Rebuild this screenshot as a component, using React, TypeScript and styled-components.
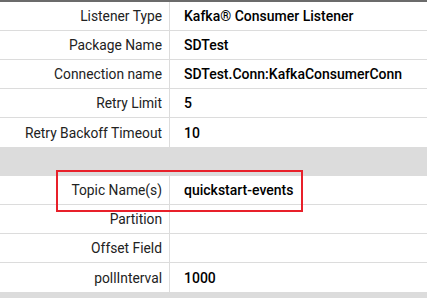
import React from "react";
import styled, { createGlobalStyle } from "styled-components";

const GlobalStyle = createGlobalStyle`
  html, body {
    margin: 0;
    padding: 0;
    background: #dcdcdc;
    font-family: Roboto, "Liberation Sans", sans-serif;
  }
`;

const SPanel = styled.div`
  position: relative;
  width: 427px;
  height: 298px;
  border-top: 2px solid #6b6b6b;
  background: #dcdcdc;
  box-sizing: border-box;
`;

const SGroup = styled.div`
  display: flex;
  flex-direction: column;
  background: #fff;
`;

const SRow = styled.div`
  display: grid;
  grid-template-columns: 170px 1fr;
  height: 29px;
  border-bottom: 1px solid #dcdcdc;
  box-sizing: border-box;
  &:last-child {
    border-bottom: none;
  }
`;

const SLabel = styled.div`
  display: flex;
  align-items: center;
  justify-content: flex-end;
  padding-right: 7px;
  border-right: 1px solid #dcdcdc;
  font-size: 13.8px;
  color: #222;
  white-space: nowrap;
`;

const SValue = styled.div`
  display: flex;
  align-items: center;
  padding-left: 14px;
  font-size: 14px;
  font-weight: 500;
  color: #000;
  white-space: nowrap;
`;

const SSpacer = styled.div`
  height: 29px;
  background: #dcdcdc;
`;

const SHighlight = styled.div`
  position: absolute;
  left: 56px;
  top: 168px;
  width: 247px;
  height: 42px;
  border: 2px solid #e8202a;
  box-sizing: border-box;
  pointer-events: none;
`;

const general = [
  ["Listener Type", "Kafka® Consumer Listener"],
  ["Package Name", "SDTest"],
  ["Connection name", "SDTest.Conn:KafkaConsumerConn"],
  ["Retry Limit", "5"],
  ["Retry Backoff Timeout", "10"],
];

const topic = [
  ["Topic Name(s)", "quickstart-events"],
  ["Partition", ""],
  ["Offset Field", ""],
  ["pollInterval", "1000"],
];

export default function App() {
  return (
    <>
      <GlobalStyle />
      <SPanel>
        <SGroup>
          {general.map(([k, v]) => (
            <SRow key={k}>
              <SLabel>{k}</SLabel>
              <SValue>{v}</SValue>
            </SRow>
          ))}
        </SGroup>
        <SSpacer />
        <SGroup>
          {topic.map(([k, v]) => (
            <SRow key={k}>
              <SLabel>{k}</SLabel>
              <SValue>{v}</SValue>
            </SRow>
          ))}
        </SGroup>
        <SHighlight />
      </SPanel>
    </>
  );
}
